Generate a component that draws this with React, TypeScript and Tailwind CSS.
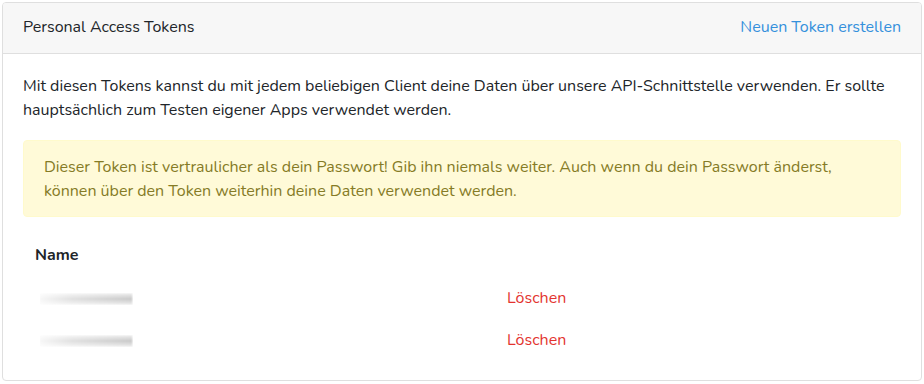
export default function App() {
  const font = { fontFamily: '"Nunito", "Noto Sans", "Liberation Sans", sans-serif' };
  return (
    <div className="w-[924px] h-[384px] bg-white pt-[2px] pl-[2px]" style={font}>
      <div className="w-[920px] h-[379px] border border-[#dfdfdf] rounded-[4px] text-[16px] leading-[23.5px] text-[#212529] overflow-hidden">
        <div className="h-[51px] bg-[#f7f7f7] border-b border-[#dfdfdf] px-[20px] flex items-center justify-between">
          <span>Personal Access Tokens</span>
          <span className="text-[#3490dc]">Neuen Token erstellen</span>
        </div>
        <div className="px-[20px] pt-[21px]">
          <p className="mb-[18px] whitespace-nowrap">
            Mit diesen Tokens kannst du mit jedem beliebigen Client deine Daten über unsere API-Schnittstelle verwenden. Er sollte
            <br />
            hauptsächlich zum Testen eigener Apps verwendet werden.
          </p>
          <div className="bg-[#fffad8] border border-[#fffacc] rounded-[4px] text-[#857b26] px-[20px] pt-[14px] pb-[13px] leading-[24px] whitespace-nowrap">
            Dieser Token ist vertraulicher als dein Passwort! Gib ihn niemals weiter. Auch wenn du dein Passwort änderst,
            <br />
            können über den Token weiterhin deine Daten verwendet werden.
          </div>
          <div className="mt-[17px] grid grid-cols-[472px_1fr]">
            <div className="px-[12px] h-[44px] flex items-center font-bold">Name</div>
            <div className="h-[44px]"></div>
            {[0, 1].map((i) => (
              <div key={i} className="contents">
                <div className="px-[12px] h-[42px] flex items-center">
                  <div
                    className="ml-[5px] w-[93px] h-[12px] blur-[0.9px]"
                    style={{
                      background:
                        'repeating-linear-gradient(90deg, #8f8f8f 0px, #8f8f8f 1.5px, #e2e2e2 1.5px, #e2e2e2 3px)',
                      maskImage:
                        'linear-gradient(90deg, rgba(0,0,0,0.15), rgba(0,0,0,0.55) 35%, rgba(0,0,0,0.95) 100%), linear-gradient(180deg, rgba(0,0,0,0.3), rgba(0,0,0,1) 50%, rgba(0,0,0,0.3))',
                      maskComposite: 'intersect',
                    }}
                  />
                </div>
                <div className="px-[12px] h-[42px] flex items-center text-[#e3342f]">Löschen</div>
              </div>
            ))}
          </div>
        </div>
      </div>
    </div>
  );
}
